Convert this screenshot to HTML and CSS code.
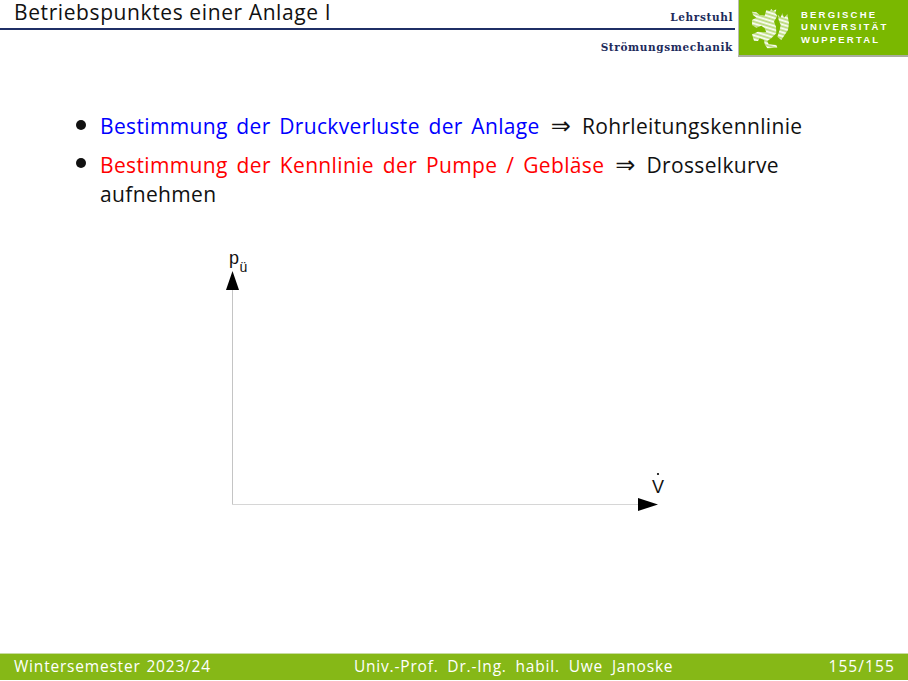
FILE: index.html
```html
<!DOCTYPE html>
<html lang="de">
<head>
<meta charset="utf-8">
<title>Betriebspunktes einer Anlage I</title>
<link rel="stylesheet" href="styles.css">
</head>
<body>
<div class="slide">
  <header class="header">
    <div class="header-left">
      <div class="title-row">
        <h1 class="title">Betriebspunktes einer Anlage I</h1>
        <span class="chair chair-top">Lehrstuhl</span>
      </div>
      <div class="rule"></div>
      <div class="chair chair-bottom">Strömungsmechanik</div>
    </div>
    <div class="logo">
      <svg class="lion" viewBox="0 0 132 138" width="44" height="46" aria-hidden="true">
        <defs>
          <pattern id="stripes" width="6" height="4" patternUnits="userSpaceOnUse" patternTransform="rotate(-6)">
            <rect width="6" height="2.9" fill="#fff"/>
          </pattern>
        </defs>
        <path fill="url(#stripes)" d="M55 15 L65 18 L70 12 L75 18 L85 13 L82 25 L88 32 L78 50 L84 65 L85 85 L70 100 L58 108 L62 118 L85 120 L88 128 L58 130 L50 118 L48 105 L35 100 L30 108 L18 108 L12 88 L30 80 L55 82 L50 70 L40 62 L25 68 L12 60 L12 45 L25 38 L15 30 L12 20 L25 22 L35 30 L50 32 L52 25 Z"/>
        <path fill="url(#stripes)" d="M90 30 L97 38 L103 25 L108 38 L118 28 L123 55 L120 75 L110 90 L100 105 L88 95 L95 75 L98 60 L92 45 Z"/>
      </svg>
      <div class="logo-text">
        <span>BERGISCHE</span>
        <span>UNIVERSITÄT</span>
        <span>WUPPERTAL</span>
      </div>
    </div>
  </header>
  <main class="content">
    <ul class="points">
      <li><span class="blue">Bestimmung der Druckverluste der Anlage</span><span class="arrow">⇒</span>Rohrleitungskennlinie</li>
      <li><span class="red">Bestimmung der Kennlinie der Pumpe / Gebläse</span><span class="arrow">⇒</span>Drosselkurve aufnehmen</li>
    </ul>
    <svg class="plot" viewBox="0 0 908 310" width="908" height="310">
      <path class="axis-y" d="M232.5 70 V286"/>
      <path class="axis-x" d="M232 285.5 H650"/>
      <polygon points="232.5,52 226,71 239,71"/>
      <polygon points="658,285.5 638,279 638,292"/>
      <text class="lbl" x="229" y="45">p</text>
      <text class="sub" x="239.5" y="53">ü</text>
      <text class="lbl" x="652" y="274">V</text>
      <circle cx="658" cy="255" r="1.1"/>
    </svg>
  </main>
  <footer class="footer">
    <span class="footer-left">Wintersemester 2023/24</span>
    <span class="footer-center">Univ.-Prof. Dr.-Ing. habil. Uwe Janoske</span>
    <span class="footer-right">155/155</span>
  </footer>
</div>
</body>
</html>
```
FILE: styles.css
```css
html, body {
  margin: 0;
  padding: 0;
  background: #fff;
}
.slide {
  width: 908px;
  height: 681px;
  display: flex;
  flex-direction: column;
  overflow: hidden;
  font-family: "Open Sans", "Noto Sans", sans-serif;
  color: #111;
}
.header {
  display: flex;
  align-items: flex-start;
  height: 59px;
}
.header-left {
  flex: 1;
  display: flex;
  flex-direction: column;
}
.title-row {
  display: flex;
  justify-content: space-between;
  align-items: flex-start;
  height: 28px;
  padding: 0 4px 0 14px;
}
.title {
  margin: 0;
  font-size: 21px;
  font-weight: 400;
  line-height: 24px;
  letter-spacing: 0.6px;
}
.chair {
  font-family: "DejaVu Serif", serif;
  font-weight: 700;
  font-size: 10.5px;
  letter-spacing: 0.6px;
  color: #1d2b5c;
  line-height: 12px;
}
.chair-top { padding-top: 11px; margin-right: 1px; }
.chair-bottom {
  text-align: right;
  padding: 11px 5px 0 0;
}
.rule {
  height: 2px;
  background: #1f2f66;
  margin-right: 3px;
}
.logo {
  width: 170px;
  height: 57px;
  box-sizing: border-box;
  background: #7ab800;
  border-left: 1px solid #b9bdb4;
  border-bottom: 2px solid #a9ad9f;
  display: flex;
  align-items: center;
  gap: 9px;
  padding-left: 9px;
}
.lion { flex: none; }
.logo-text {
  display: flex;
  flex-direction: column;
  font-family: "Liberation Sans", sans-serif;
  font-weight: 700;
  font-size: 9.5px;
  line-height: 12.5px;
  letter-spacing: 2.2px;
  color: #fff;
}
.content {
  flex: 1;
  min-height: 0;
}
.points {
  list-style: none;
  margin: 0;
  padding: 53px 100px 0 100px;
  font-size: 21px;
  line-height: 29px;
  letter-spacing: 0.35px;
  word-spacing: 2.8px;
}
.points li {
  position: relative;
  margin-bottom: 10px;
}
.points li::before {
  content: "";
  position: absolute;
  left: -24px;
  top: 8px;
  width: 10px;
  height: 10px;
  border-radius: 50%;
  background: #111;
}
.points li + li::before { top: 7px; }
.blue { color: #0000ff; }
.red { color: #ff0000; word-spacing: 3.1px; }
.arrow {
  font-family: "Liberation Serif", "DejaVu Sans", serif;
  font-size: 24px;
  line-height: 20px;
  margin: 0 11px;
  letter-spacing: 0;
}
.plot {
  display: block;
  margin-top: 10px;
}
.axis-y {
  fill: none;
  stroke: #c4c4c4;
  stroke-width: 1;
}
.axis-x {
  fill: none;
  stroke: #d6d6d6;
  stroke-width: 1;
}
.lbl {
  font-family: "Liberation Sans", sans-serif;
  font-size: 18px;
  fill: #111;
}
.sub {
  font-family: "Liberation Sans", sans-serif;
  font-size: 14px;
  fill: #111;
}
.footer {
  display: flex;
  justify-content: space-between;
  align-items: center;
  height: 27px;
  margin-bottom: 1px;
  padding: 0 13px 2px 14px;
  box-sizing: border-box;
  background: #86b817;
  border-top: 1px solid #c8dca0;
  color: #fff;
  font-size: 15.5px;
  letter-spacing: 0.8px;
}
.footer-left { word-spacing: 1px; }
.footer-center { margin-right: 12px; word-spacing: 4px; }
.footer-right { letter-spacing: 1.1px; }
```
